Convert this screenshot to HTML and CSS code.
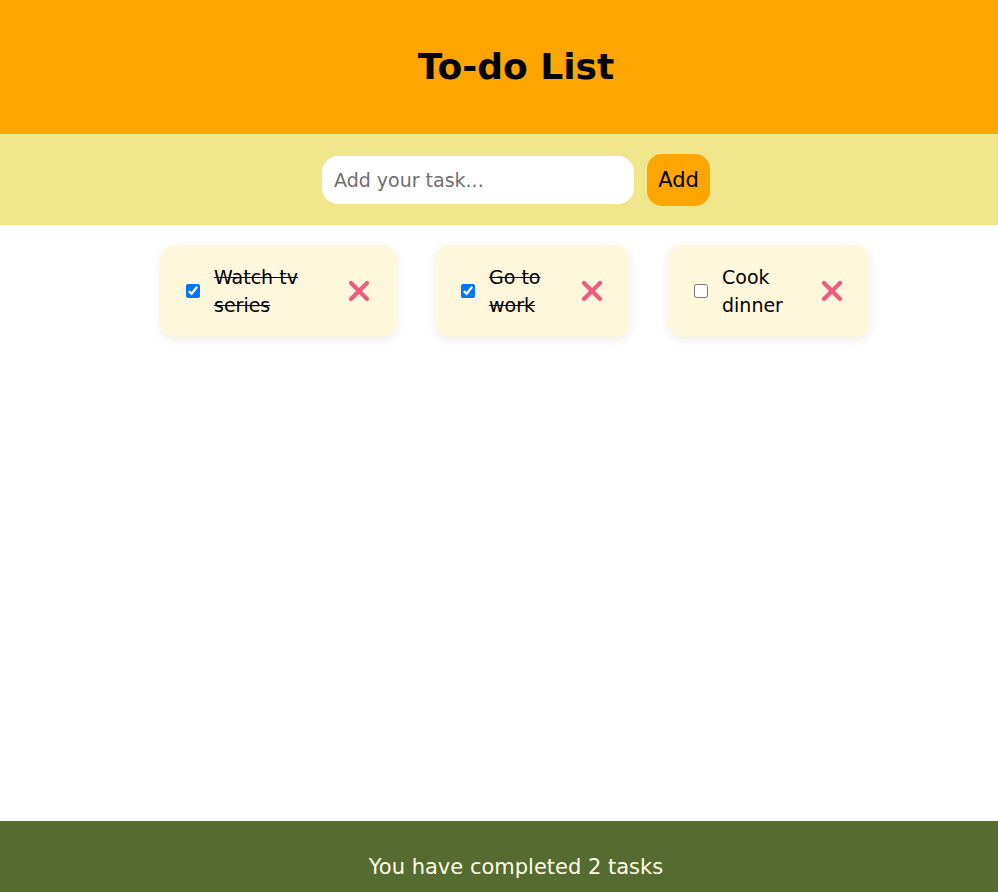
FILE: index.html
```html
<!DOCTYPE html>
<html lang="en">
<head>
<meta charset="utf-8">
<title>To-do List</title>
<link rel="stylesheet" href="styles.css">
</head>
<body>
<div class="app">
  <header class="header">
    <h1 class="title">To-do List</h1>
  </header>
  <form class="add-bar" onsubmit="return false">
    <input class="task-input" type="text" placeholder="Add your task...">
    <button class="add-btn" type="submit">Add</button>
  </form>
  <main class="list-area">
    <ul class="task-list">
      <li class="card card-1">
        <input class="check" type="checkbox" checked>
        <span class="task-text done">Watch tv series</span>
        <button class="del" type="button" aria-label="Delete">
          <svg width="22" height="22" viewBox="0 0 22 22"><path d="M3 3 L19 19 M19 3 L3 19" stroke="#EE5B7C" stroke-width="4.2" stroke-linecap="round" fill="none"/></svg>
        </button>
      </li>
      <li class="card card-2">
        <input class="check" type="checkbox" checked>
        <span class="task-text done">Go to work</span>
        <button class="del" type="button" aria-label="Delete">
          <svg width="22" height="22" viewBox="0 0 22 22"><path d="M3 3 L19 19 M19 3 L3 19" stroke="#EE5B7C" stroke-width="4.2" stroke-linecap="round" fill="none"/></svg>
        </button>
      </li>
      <li class="card card-3">
        <input class="check" type="checkbox">
        <span class="task-text">Cook dinner</span>
        <button class="del" type="button" aria-label="Delete">
          <svg width="22" height="22" viewBox="0 0 22 22"><path d="M3 3 L19 19 M19 3 L3 19" stroke="#EE5B7C" stroke-width="4.2" stroke-linecap="round" fill="none"/></svg>
        </button>
      </li>
    </ul>
  </main>
  <footer class="footer">You have completed 2 tasks</footer>
</div>
</body>
</html>
```

FILE: styles.css
```css
* { box-sizing: border-box; }

html, body {
  margin: 0;
  padding: 0;
}

body {
  font-family: "Comic Sans MS", "DejaVu Sans", sans-serif;
  color: #000;
  background: #fff;
  overflow: hidden;
}

.app {
  min-height: 100vh;
  display: flex;
  flex-direction: column;
}

.header {
  background: #FFA500;
  height: 134px;
  display: flex;
  align-items: center;
  justify-content: center;
  padding-left: 34px;
}

.title {
  margin: 0;
  font-size: 36px;
  font-weight: bold;
  line-height: 1;
}

.add-bar {
  margin: 0;
  background: #F0E68C;
  height: 91px;
  display: flex;
  align-items: center;
  justify-content: center;
  gap: 13px;
  padding-left: 34px;
}

.task-input {
  width: 312px;
  height: 48px;
  border: none;
  border-radius: 16px;
  background: #fff;
  padding: 0 12px;
  font-family: inherit;
  font-size: 19px;
  outline: none;
}

.task-input::placeholder {
  color: #6f6f6f;
}

.add-btn {
  width: 63px;
  height: 52px;
  border: none;
  border-radius: 15px;
  background: #FFA500;
  font-family: inherit;
  font-size: 21px;
  color: #000;
  padding: 0;
}

.list-area {
  flex: 1;
}

.task-list {
  list-style: none;
  margin: 0;
  padding: 20px 0 0 32px;
  display: flex;
  justify-content: center;
  gap: 38px;
}

.card {
  background: #FFF8DC;
  border-radius: 14px;
  height: 92px;
  display: flex;
  align-items: center;
  padding: 0 27px 0 26px;
  box-shadow: 0 3px 10px rgba(0, 0, 0, 0.07);
}

.card-1 { width: 237px; }
.card-2 { width: 195px; }
.card-3 { width: 202px; }

.check {
  margin: 0 14px 0 0;
  width: 14px;
  height: 14px;
  flex: none;
}

.task-text {
  flex: 1;
  font-size: 19px;
  line-height: 28px;
  padding-right: 8px;
}

.task-text.done {
  text-decoration: line-through;
}

.del {
  flex: none;
  border: none;
  background: none;
  padding: 0;
  width: 22px;
  height: 22px;
  display: flex;
}

.footer {
  background: #556B2F;
  color: #FFFDE6;
  height: 71px;
  padding: 32px 0 0 34px;
  text-align: center;
  font-size: 21px;
  line-height: 28px;
}
```
